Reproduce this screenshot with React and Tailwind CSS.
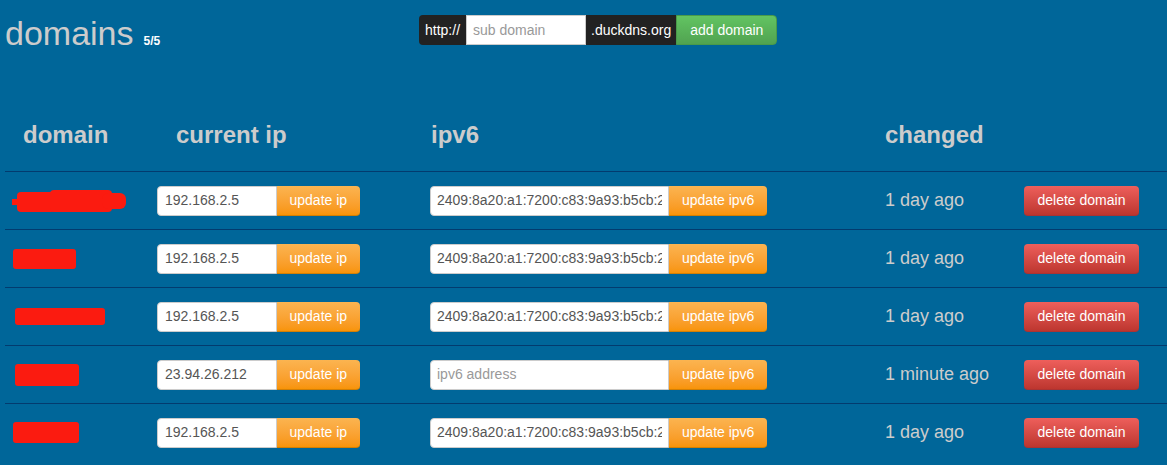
import React from "react";

const rows = [
  { ip: "192.168.2.5", ipv6: "2409:8a20:a1:7200:c83:9a93:b5cb:2a4d", changed: "1 day ago", mark: "big" },
  { ip: "192.168.2.5", ipv6: "2409:8a20:a1:7200:c83:9a93:b5cb:2a4d", changed: "1 day ago", mark: "w-[63px] h-[20px] ml-[8px]" },
  { ip: "192.168.2.5", ipv6: "2409:8a20:a1:7200:c83:9a93:b5cb:2a4d", changed: "1 day ago", mark: "w-[90px] h-[17px] ml-[10px]" },
  { ip: "23.94.26.212", ipv6: "", changed: "1 minute ago", mark: "w-[64px] h-[22px] ml-[10px]" },
  { ip: "192.168.2.5", ipv6: "2409:8a20:a1:7200:c83:9a93:b5cb:2a4d", changed: "1 day ago", mark: "w-[66px] h-[21px] ml-[8px]" },
];

// redacted domain names are just red blobs
const Redacted = ({ mark }) => {
  if (mark === "big") {
    return (
      <div className="ml-[7px] relative w-[114px] h-[22px]">
        <div className="absolute left-[5px] top-[2px] w-[38px] h-[20px] bg-[#fb1b10] rounded-sm" />
        <div className="absolute left-[38px] top-0 w-[62px] h-[22px] bg-[#fb1b10] rounded-sm" />
        <div className="absolute left-[90px] top-[3px] w-[24px] h-[16px] bg-[#fb1b10] rounded-md" />
        <div className="absolute left-0 top-[9px] w-[20px] h-[6px] bg-[#fb1b10]" />
      </div>
    );
  }
  return <div className={`${mark} bg-[#fb1b10] rounded-[3px]`} />;
};

export default function App() {
  return (
    <div className="min-h-screen bg-[#006699] font-['Liberation_Sans',Arial,sans-serif] text-[14px]">
      {/* top bar */}
      <div className="flex h-[60px]">
        <div className="w-[419px] pl-[5px] pt-[16px] flex items-baseline">
          <h1 className="text-[34px] leading-[34px] text-[#cccccc]">domains</h1>
          <span className="ml-[10px] text-[12px] font-bold text-white">5/5</span>
        </div>
        <div className="mt-[15px] flex h-[30px]">
          <span className="flex items-center px-[6px] bg-[#222222] text-white rounded-l-[4px]">http://</span>
          <input
            placeholder="sub domain"
            className="w-[120px] px-[6px] bg-white border border-[#cccccc] text-[#555] placeholder:text-[#999] outline-none"
          />
          <span className="flex items-center px-[5px] bg-[#222222] text-white">.duckdns.org</span>
          <button className="px-[13px] text-white bg-linear-to-b from-[#62c462] to-[#51a351] rounded-r-[4px] border border-[#4a9a4a]">
            add domain
          </button>
        </div>
      </div>

      {/* table */}
      <div className="ml-[5px]">
        <div className="flex pt-[55px] pb-[16px] text-[24px] leading-[40px] font-bold text-[#cccccc]">
          <div className="w-[152px] pl-[18px]">domain</div>
          <div className="w-[273px] pl-[19px]">current ip</div>
          <div className="w-[455px] pl-[1px]">ipv6</div>
          <div>changed</div>
        </div>

        {rows.map((r, i) => (
          <div key={i} className="flex items-center h-[58px] border-t border-[#033b6e]">
            <div className="w-[152px]">
              <Redacted mark={r.mark} />
            </div>
            <div className="w-[273px] flex h-[30px]">
              <input
                readOnly
                value={r.ip}
                className="w-[120px] px-[7px] bg-white border border-[#cccccc] rounded-l-[4px] text-[#555] outline-none"
              />
              <button className="px-[12.5px] text-white bg-linear-to-b from-[#fbb450] to-[#f89406] rounded-r-[4px] border-b border-[#d27f05]">
                update ip
              </button>
            </div>
            <div className="w-[455px] flex h-[30px]">
              <input
                readOnly
                value={r.ipv6}
                placeholder="ipv6 address"
                className="w-[239px] px-[6px] bg-white border border-[#cccccc] rounded-l-[4px] text-[#555] placeholder:text-[#999] outline-none"
              />
              <button className="px-[13px] text-white bg-linear-to-b from-[#fbb450] to-[#f89406] rounded-r-[4px] border-b border-[#d27f05]">
                update ipv6
              </button>
            </div>
            <div className="w-[139px] text-[18px] text-[#cccccc]">{r.changed}</div>
            <button className="h-[30px] px-[13.5px] text-white bg-linear-to-b from-[#ee5f5b] to-[#bd362f] rounded-[4px] border-b border-[#a33]">
              delete domain
            </button>
          </div>
        ))}
      </div>
    </div>
  );
}
